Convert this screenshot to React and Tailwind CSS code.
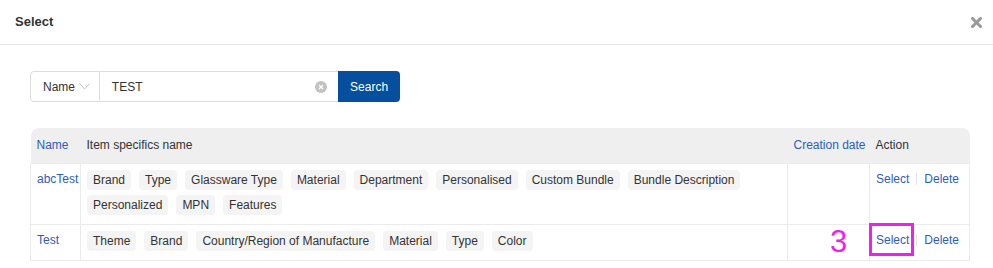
import React from "react";

const FONT = { fontFamily: '"Liberation Sans", Arial, sans-serif' };

function Tag({ children }) {
  return (
    <span className="inline-block h-5 leading-5 px-[6px] mr-2 mb-[5px] rounded bg-[#f4f4f4] text-[#333] text-[12px] whitespace-nowrap">
      {children}
    </span>
  );
}

function Actions({ boxed }) {
  return (
    <div className="relative flex items-center text-[12px] text-[#2d5dbf] leading-5">
      <span>Select</span>
      <span className="mx-[7px] h-3 w-px bg-[#e3e3e3]" />
      <span>Delete</span>
      {boxed && (
        <span className="absolute left-[-7px] top-[-7px] w-[45px] h-[33px] border-[3px] border-[#f01ef0]" />
      )}
    </div>
  );
}

export default function App() {
  const rows = [
    {
      name: "abcTest",
      tags: [
        "Brand",
        "Type",
        "Glassware Type",
        "Material",
        "Department",
        "Personalised",
        "Custom Bundle",
        "Bundle Description",
        "Personalized",
        "MPN",
        "Features",
      ],
    },
    {
      name: "Test",
      tags: ["Theme", "Brand", "Country/Region of Manufacture", "Material", "Type", "Color"],
      mark: true,
    },
  ];

  return (
    <div className="w-[993px] h-[268px] bg-white overflow-hidden text-[#333]" style={FONT}>
      {/* header */}
      <div className="h-[45px] border-b border-[#e5e5e5] flex items-center justify-between pl-[15px] pr-[11px]">
        <span className="text-[13px] font-bold text-[#333]">Select</span>
        <svg width="11" height="11" viewBox="0 0 11 11">
          <path d="M1.5 1.5 L9.5 9.5 M9.5 1.5 L1.5 9.5" stroke="#999" strokeWidth="3" strokeLinecap="square" />
        </svg>
      </div>

      {/* search */}
      <div className="pl-[30px] pt-[26px]">
        <div className="flex h-[31px] w-[370px]">
          <div className="flex items-center w-[70px] border border-[#dcdcdc] rounded-l pl-3 text-[12px] text-[#333]">
            <span>Name</span>
            <svg className="ml-[4px]" width="11" height="7" viewBox="0 0 11 7">
              <path d="M0.5 0.5 L5.5 6 L10.5 0.5" fill="none" stroke="#c4c4c4" strokeWidth="1" />
            </svg>
          </div>
          <div className="flex items-center justify-between w-[239px] border-y border-[#dcdcdc] pl-3 pr-[11px] text-[12px] text-[#333]">
            <span>TEST</span>
            <svg width="12" height="12" viewBox="0 0 12 12">
              <circle cx="6" cy="6" r="6" fill="#c2c2c2" />
              <path d="M4 4 L8 8 M8 4 L4 8" stroke="#fff" strokeWidth="1.3" />
            </svg>
          </div>
          <button className="w-[62px] bg-[#054f9e] text-white text-[12px] rounded-r">Search</button>
        </div>
      </div>

      {/* table */}
      <div className="ml-[30px] mt-[26px] w-[939px]">
        <table className="w-full border-collapse table-fixed text-[12px]">
          <colgroup>
            <col className="w-[50px]" />
            <col className="w-[707px]" />
            <col className="w-[82px]" />
            <col className="w-[100px]" />
          </colgroup>
          <thead>
            <tr className="h-[35px] bg-[#efefef] text-left">
              <th className="font-normal px-[6px] text-[#2d5dbf] rounded-tl-lg whitespace-nowrap">Name</th>
              <th className="font-normal px-[6px] text-[#333] whitespace-nowrap">Item specifics name</th>
              <th className="font-normal px-[6px] text-[#2d5dbf] whitespace-nowrap">Creation date</th>
              <th className="font-normal px-[6px] text-[#333] rounded-tr-lg whitespace-nowrap">Action</th>
            </tr>
          </thead>
          <tbody>
            {rows.map((r) => (
              <tr key={r.name} className="border border-[#ebebeb] align-top">
                <td className="border-r border-[#ebebeb] px-[6px] pt-[5px] text-[#2d5dbf] leading-5">{r.name}</td>
                <td className="border-r border-[#ebebeb] px-[6px] pt-[6px] pb-[4px] leading-none">
                  <div className="flex flex-wrap">
                    {r.tags.map((t, i) => (
                      <Tag key={i}>{t}</Tag>
                    ))}
                  </div>
                </td>
                <td className="border-r border-[#ebebeb] relative">
                  {r.mark && (
                    <span
                      className="absolute left-[42px] top-[1px] text-[31px] leading-[32px] text-[#f01ef0]"
                      style={{ fontFamily: '"Liberation Sans", Arial, sans-serif' }}
                    >
                      3
                    </span>
                  )}
                </td>
                <td className="px-[6px] pt-[5px]">
                  <Actions boxed={r.mark} />
                </td>
              </tr>
            ))}
          </tbody>
        </table>
      </div>
    </div>
  );
}
